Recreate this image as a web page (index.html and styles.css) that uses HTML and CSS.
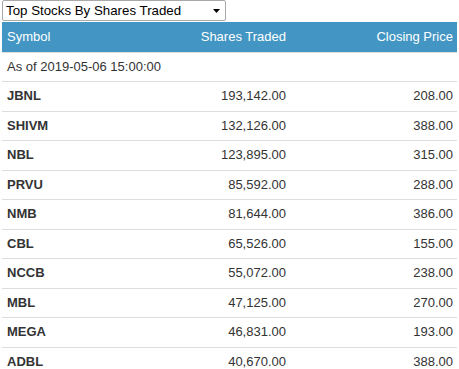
FILE: index.html
```html
<!DOCTYPE html>
<html>
<head>
<meta charset="utf-8">
<link rel="stylesheet" href="styles.css">
</head>
<body>
<div class="widget">
  <div class="picker">
    <span class="picker-label">Top Stocks By Shares Traded</span>
    <svg class="caret" width="7" height="4" viewBox="0 0 7 4"><path d="M0 0H7L3.5 4Z" fill="#000"/></svg>
  </div>
  <table class="stocks">
    <colgroup><col class="c1"><col class="c2"><col class="c3"></colgroup>
    <thead>
      <tr><th class="l">Symbol</th><th class="r">Shares Traded</th><th class="r">Closing Price</th></tr>
    </thead>
    <tbody>
      <tr><td colspan="3" class="asof">As of 2019-05-06 15:00:00</td></tr>
      <tr><td class="sym">JBNL</td><td class="r">193,142.00</td><td class="r">208.00</td></tr>
      <tr><td class="sym">SHIVM</td><td class="r">132,126.00</td><td class="r">388.00</td></tr>
      <tr><td class="sym">NBL</td><td class="r">123,895.00</td><td class="r">315.00</td></tr>
      <tr><td class="sym">PRVU</td><td class="r">85,592.00</td><td class="r">288.00</td></tr>
      <tr><td class="sym">NMB</td><td class="r">81,644.00</td><td class="r">386.00</td></tr>
      <tr><td class="sym">CBL</td><td class="r">65,526.00</td><td class="r">155.00</td></tr>
      <tr><td class="sym">NCCB</td><td class="r">55,072.00</td><td class="r">238.00</td></tr>
      <tr><td class="sym">MBL</td><td class="r">47,125.00</td><td class="r">270.00</td></tr>
      <tr><td class="sym">MEGA</td><td class="r">46,831.00</td><td class="r">193.00</td></tr>
      <tr><td class="sym">ADBL</td><td class="r">40,670.00</td><td class="r">388.00</td></tr>
    </tbody>
  </table>
</div>
</body>
</html>
```
FILE: styles.css
```css
html, body { margin: 0; padding: 0; background: #fff; }
body { font-family: "Liberation Sans", Arial, sans-serif; font-size: 13px; color: #333; }
.widget { padding: 0 2px; }
.picker {
  box-sizing: border-box;
  width: 224px; height: 21px;
  border: 1px solid #a9a9a9;
  border-radius: 2px;
  display: flex; align-items: center; justify-content: space-between;
  padding: 0 5px 0 3px;
  color: #000;
  font-size: 13.3px;
}
.caret { display: block; }
.stocks { width: 455px; border-collapse: collapse; margin-top: 1px; line-height: 18.5px; }
.c1 { width: 140px; } .c2 { width: 148px; } .c3 { width: 167px; }
th { background: #4396c3; color: #fff; font-weight: normal; padding: 6px 4px 5px 5px; border-bottom: 1px solid #ddd; }
td { padding: 5px 4px 5px 5px; border-top: 1px solid #ddd; }
tbody tr:first-child td { border-top: none; }
.l { text-align: left; }
.r { text-align: right; }
.sym { font-weight: bold; }
.asof { padding-top: 5px; }
```
